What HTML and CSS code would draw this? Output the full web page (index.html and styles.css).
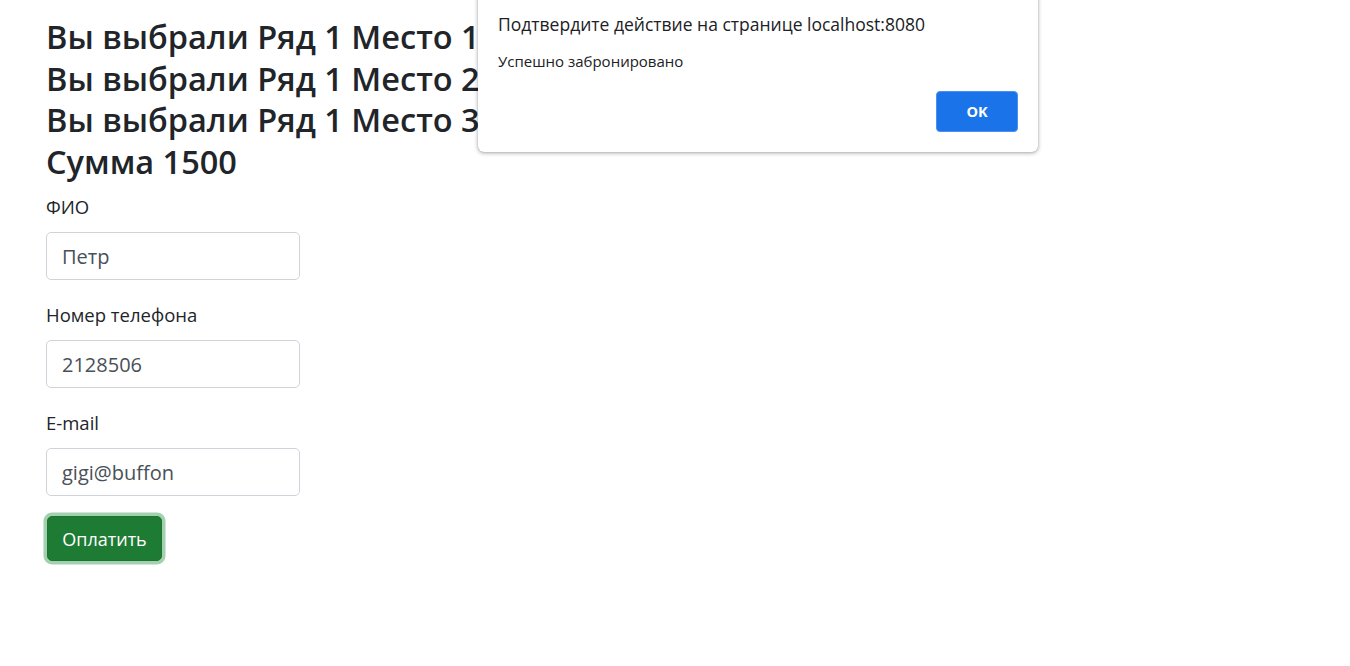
FILE: index.html
```html
<!DOCTYPE html>
<html lang="ru">
<head>
<meta charset="utf-8">
<link rel="stylesheet" href="styles.css">
</head>
<body>
<main class="page">
  <h2 class="line">Вы выбрали Ряд 1 Место 1</h2>
  <h2 class="line">Вы выбрали Ряд 1 Место 2</h2>
  <h2 class="line">Вы выбрали Ряд 1 Место 3</h2>
  <h2 class="line">Сумма 1500</h2>
  <form class="form">
    <div class="field">
      <label class="label">ФИО</label>
      <input class="input" type="text" value="Петр">
    </div>
    <div class="field">
      <label class="label">Номер телефона</label>
      <input class="input" type="text" value="2128506">
    </div>
    <div class="field">
      <label class="label">E-mail</label>
      <input class="input" type="text" value="gigi@buffon">
    </div>
    <button class="pay" type="button">Оплатить</button>
  </form>
</main>
<div class="dialog">
  <div class="dialog-title">Подтвердите действие на странице localhost:8080</div>
  <div class="dialog-msg">Успешно забронировано</div>
  <div class="dialog-actions"><button class="ok" type="button">OK</button></div>
</div>
</body>
</html>
```
FILE: styles.css
```css
html, body { margin: 0; padding: 0; background: #fff; }
body {
  font-family: "Open Sans", "Noto Sans", sans-serif;
  color: #212529;
  width: 1350px;
  height: 666px;
  overflow: hidden;
  position: relative;
}
.page { padding: 16px 46px 0; }
.line {
  margin: 0;
  font-size: 32.5px;
  font-weight: 600;
  line-height: 41.5px;
}
.form { display: flex; flex-direction: column; margin-top: 10px; }
.field { display: flex; flex-direction: column; margin-bottom: 20px; }
.label { font-size: 18.5px; line-height: 30px; margin-bottom: 10px; }
.input {
  box-sizing: border-box;
  width: 254px;
  height: 48px;
  padding: 8px 15px;
  font-family: inherit;
  font-size: 20px;
  color: #495057;
  border: 1px solid #ced4da;
  border-radius: 5px;
  background: #fff;
  outline: none;
}
.pay {
  align-self: flex-start;
  margin-top: 0;
  margin-left: 1px;
  box-sizing: border-box;
  width: 115px;
  height: 45px;
  padding: 0;
  font-family: inherit;
  font-size: 18px;
  color: #fff;
  background: #1e7b34;
  border: 1px solid #1c7430;
  border-radius: 5px;
  box-shadow: 0 0 0 3.5px #a3d0ae;
}
.dialog {
  position: absolute;
  left: 478px;
  top: -10px;
  width: 560px;
  height: 162px;
  box-sizing: border-box;
  padding: 24px 20px 0;
  background: #fff;
  border-radius: 0 0 6px 6px;
  box-shadow: 0 1px 4px rgba(0,0,0,0.35), 0 0 1px rgba(0,0,0,0.3);
  display: flex;
  flex-direction: column;
}
.dialog-title { font-size: 17.5px; line-height: 20px; color: #202124; }
.dialog-msg { font-size: 15px; line-height: 18px; color: #202124; margin-top: 18px; }
.dialog-actions { display: flex; justify-content: flex-end; margin-top: 21px; }
.ok {
  width: 82px;
  height: 41px;
  font-family: inherit;
  font-size: 14.5px;
  font-weight: 700;
  color: #fff;
  background: #1a73e8;
  border: 1px solid #4b8ff0;
  border-radius: 4px;
}
```
